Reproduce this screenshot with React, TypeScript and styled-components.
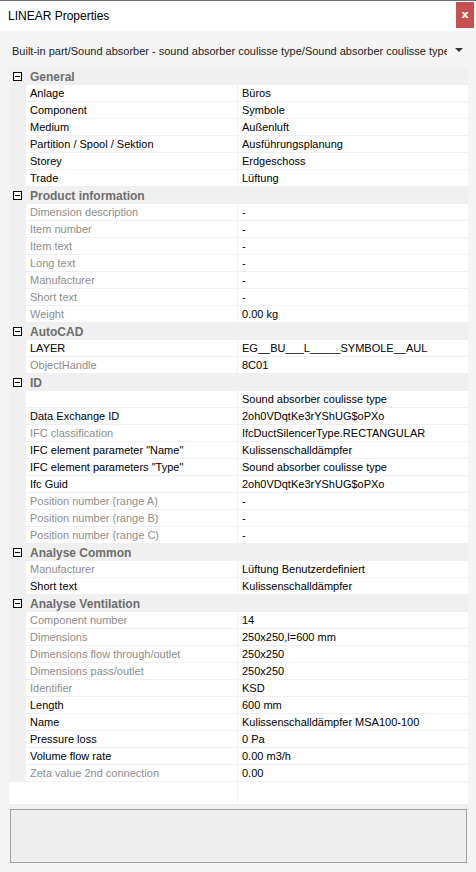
import React from 'react';
import styled, { createGlobalStyle } from 'styled-components';

const GlobalStyle = createGlobalStyle`
  html, body {
    margin: 0;
    padding: 0;
    background: #f4f4f4;
  }
  body {
    font-family: "Liberation Sans", Arial, sans-serif;
    font-size: 11px;
  }
`;

const Window = styled.div`
  width: 476px;
  height: 872px;
  display: flex;
  flex-direction: column;
  background: #f4f4f4;
  border-top: 1px solid #6e6e6e;
  box-sizing: border-box;
  overflow: hidden;
`;

const TitleBar = styled.div`
  height: 30px;
  background: #ffffff;
  display: flex;
  align-items: flex-start;
  justify-content: space-between;
  padding-left: 8px;
  padding-right: 2px;
`;

const Title = styled.div`
  font-size: 12px;
  color: #000;
  line-height: 30px;
`;

const CloseButton = styled.button`
  width: 18px;
  height: 26px;
  margin-top: 1px;
  border: none;
  padding: 0;
  background: #c75050;
  color: #fff;
  font-family: "DejaVu Sans", sans-serif;
  font-weight: bold;
  font-size: 11px;
  line-height: 24px;
`;

const Body = styled.div`
  flex: 1;
  display: flex;
  flex-direction: column;
  padding: 0 8px 0 9px;
`;

const TypeSelect = styled.div`
  height: 37px;
  box-sizing: border-box;
  padding: 3px 5px 0 3px;
  display: flex;
  align-items: center;
  gap: 8px;
  color: #222;
`;

const TypeText = styled.div`
  flex: 1;
  white-space: nowrap;
  overflow: hidden;
  font-size: 11px;
`;

const Caret = styled.div`
  width: 0;
  height: 0;
  border-left: 4px solid transparent;
  border-right: 4px solid transparent;
  border-top: 4px solid #333;
  margin-top: -2px;
`;

const Grid = styled.div`
  background: #ffffff;
  display: flex;
  flex-direction: column;
`;

const HeaderRow = styled.div`
  height: 17px;
  background: #f0f0f0;
  display: grid;
  grid-template-columns: 17px 1fr;
  align-items: center;
`;

const Toggle = styled.div`
  width: 7px;
  height: 7px;
  border: 1px solid #000;
  margin-left: 4px;
  position: relative;
  background: #fff;

  &::after {
    content: '';
    position: absolute;
    left: 1px;
    right: 1px;
    top: 3px;
    height: 1px;
    background: #000;
  }
`;

const HeaderText = styled.div`
  font-weight: bold;
  font-size: 12px;
  color: #6d6d6d;
  padding-left: 4px;
`;

const Row = styled.div`
  height: 17px;
  display: grid;
  grid-template-columns: 17px 212px 1fr;
`;

const Gutter = styled.div`
  background: #f0f0f0;
`;

const Cell = styled.div<{ $muted?: boolean; $divider?: boolean }>`
  border-bottom: 1px solid #f0f0f0;
  border-right: ${(p) => (p.$divider ? '1px solid #f0f0f0' : 'none')};
  color: ${(p) => (p.$muted ? '#8d8d8d' : '#000')};
  padding-left: 4px;
  line-height: 16px;
  white-space: nowrap;
  overflow: hidden;
`;

const Filler = styled.div`
  height: 22px;
  display: grid;
  grid-template-columns: 229px 1fr;
  border-bottom: 5px solid #f0f0f0;

  & > div:first-child {
    border-right: 1px solid #f0f0f0;
    margin-bottom: 1px;
  }
`;

const Description = styled.div`
  height: 52px;
  margin-left: 1px;
  margin-right: 1px;
  border: 1px solid #a0a0a0;
  background: #eeeeee;
`;

type Prop = { label: string; value: string; muted?: boolean };
type Section = { title: string; rows: Prop[] };

const sections: Section[] = [
  {
    title: 'General',
    rows: [
      { label: 'Anlage', value: 'Büros' },
      { label: 'Component', value: 'Symbole' },
      { label: 'Medium', value: 'Außenluft' },
      { label: 'Partition / Spool / Sektion', value: 'Ausführungsplanung' },
      { label: 'Storey', value: 'Erdgeschoss' },
      { label: 'Trade', value: 'Lüftung' },
    ],
  },
  {
    title: 'Product information',
    rows: [
      { label: 'Dimension description', value: '-', muted: true },
      { label: 'Item number', value: '-', muted: true },
      { label: 'Item text', value: '-', muted: true },
      { label: 'Long text', value: '-', muted: true },
      { label: 'Manufacturer', value: '-', muted: true },
      { label: 'Short text', value: '-', muted: true },
      { label: 'Weight', value: '0.00 kg', muted: true },
    ],
  },
  {
    title: 'AutoCAD',
    rows: [
      { label: 'LAYER', value: 'EG__BU___L_____SYMBOLE__AUL' },
      { label: 'ObjectHandle', value: '8C01', muted: true },
    ],
  },
  {
    title: 'ID',
    rows: [
      { label: '', value: 'Sound absorber coulisse type' },
      { label: 'Data Exchange ID', value: '2oh0VDqtKe3rYShUG$oPXo' },
      { label: 'IFC classification', value: 'IfcDuctSilencerType.RECTANGULAR', muted: true },
      { label: 'IFC element parameter "Name"', value: 'Kulissenschalldämpfer' },
      { label: 'IFC element parameters "Type"', value: 'Sound absorber coulisse type' },
      { label: 'Ifc Guid', value: '2oh0VDqtKe3rYShUG$oPXo' },
      { label: 'Position number (range A)', value: '-', muted: true },
      { label: 'Position number (range B)', value: '-', muted: true },
      { label: 'Position number (range C)', value: '-', muted: true },
    ],
  },
  {
    title: 'Analyse Common',
    rows: [
      { label: 'Manufacturer', value: 'Lüftung Benutzerdefiniert', muted: true },
      { label: 'Short text', value: 'Kulissenschalldämpfer' },
    ],
  },
  {
    title: 'Analyse Ventilation',
    rows: [
      { label: 'Component number', value: '14', muted: true },
      { label: 'Dimensions', value: '250x250,l=600 mm', muted: true },
      { label: 'Dimensions flow through/outlet', value: '250x250', muted: true },
      { label: 'Dimensions pass/outlet', value: '250x250', muted: true },
      { label: 'Identifier', value: 'KSD', muted: true },
      { label: 'Length', value: '600 mm' },
      { label: 'Name', value: 'Kulissenschalldämpfer MSA100-100' },
      { label: 'Pressure loss', value: '0 Pa' },
      { label: 'Volume flow rate', value: '0.00 m3/h' },
      { label: 'Zeta value 2nd connection', value: '0.00', muted: true },
    ],
  },
];

const App: React.FC = () => {
  return (
    <>
      <GlobalStyle />
      <Window>
        <TitleBar>
          <Title>LINEAR Properties</Title>
          <CloseButton>x</CloseButton>
        </TitleBar>
        <Body>
          <TypeSelect>
            <TypeText>
              Built-in part/Sound absorber - sound absorber coulisse type/Sound absorber coulisse type (Rectangular)
            </TypeText>
            <Caret />
          </TypeSelect>
          <Grid>
            {sections.map((s) => (
              <React.Fragment key={s.title}>
                <HeaderRow>
                  <Toggle />
                  <HeaderText>{s.title}</HeaderText>
                </HeaderRow>
                {s.rows.map((r, i) => (
                  <Row key={i}>
                    <Gutter />
                    <Cell $muted={r.muted} $divider>
                      {r.label}
                    </Cell>
                    <Cell>{r.value}</Cell>
                  </Row>
                ))}
              </React.Fragment>
            ))}
            <Filler>
              <div />
              <div />
            </Filler>
          </Grid>
          <Description />
        </Body>
      </Window>
    </>
  );
};

export default App;
